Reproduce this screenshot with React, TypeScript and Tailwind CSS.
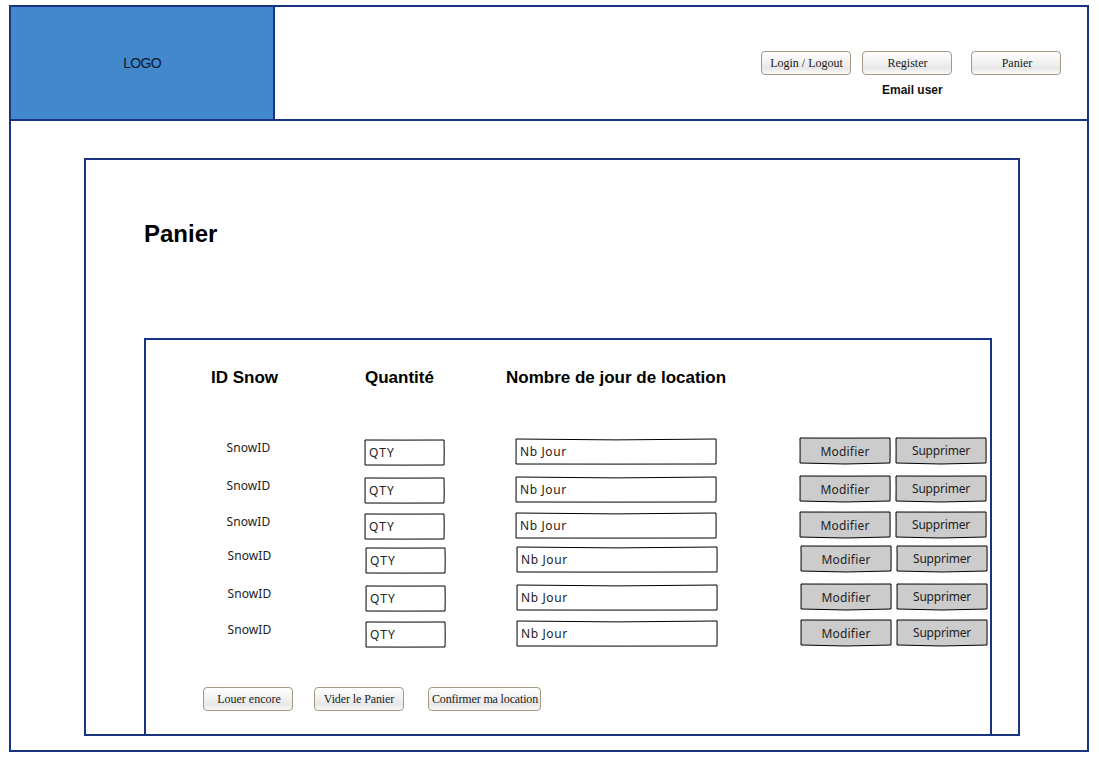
import type { ReactNode } from "react";

type Wobble = { width: number; path: string; fill: string };

const QTY_BOX: Wobble = { width: 82, path: "M1 1 L40 1.1 L80 1 L80.2 14 L80 26 L40 26.1 L1 26 L1.1 14 Z", fill: "#ffffff" };
const DAYS_BOX: Wobble = { width: 203, path: "M1 1 Q101 2.8 201 1 L201.1 13 L201 26 L101 26.1 L1 26 L1.1 13 Z", fill: "#ffffff" };
const ACTION_BOX: Wobble = { width: 92, path: "M1 1 L46 1.1 L91 1 L91.1 13 L91 26 Q46 28 1 26 L1.1 13 Z", fill: "#cccccc" };

const rows = [
  { id: 1, className: "h-[38px]" },
  { id: 2, className: "h-[36px]" },
  { id: 3, className: "h-[34px]" },
  { id: 4, className: "h-[38px] ml-px" },
  { id: 5, className: "h-[36px] ml-px" },
  { id: 6, className: "h-[65px] ml-px" },
];

function SketchBox({ box, className, children }: { box: Wobble; className: string; children: ReactNode }) {
  return (
    <div className={`grid h-[28px] ${className}`} style={{ width: box.width }}>
      <svg className="col-start-1 row-start-1 block" width={box.width} height="28" viewBox={`0 0 ${box.width} 28`}>
        <path d={box.path} fill={box.fill} stroke="#000000" strokeWidth="1" strokeLinejoin="round" />
      </svg>
      {children}
    </div>
  );
}

function Button({ className, children }: { className: string; children: ReactNode }) {
  return (
    <button
      className={`h-6 shrink-0 whitespace-nowrap rounded-[4px] border border-[#a69985] bg-linear-to-b from-white via-[#e8e8e8] via-75% to-[#fafafa] font-['Liberation_Serif',serif] text-[12px] leading-[22px] text-[#1a1a1a] ${className}`}
    >
      {children}
    </button>
  );
}

function CartRow({ className }: { className: string }) {
  return (
    <div
      className={`grid shrink-0 grid-cols-[138px_151px_284px_96px_92px] items-start pl-[80px] font-['Comic_Sans_MS','Noto_Sans',sans-serif] text-[12px] leading-[16px] text-[#222] ${className}`}
    >
      <span className="mt-[3px] ml-[0.5px] tracking-[0.1px]">SnowID</span>
      <SketchBox box={QTY_BOX} className="mt-[2px]">
        <span className="col-start-1 row-start-1 mt-[6px] ml-[5px] tracking-[1.2px]">QTY</span>
      </SketchBox>
      <SketchBox box={DAYS_BOX} className="mt-px">
        <span className="col-start-1 row-start-1 mt-[6px] ml-[5px] tracking-[0.6px]">Nb Jour</span>
      </SketchBox>
      <SketchBox box={ACTION_BOX} className="">
        <span className="col-start-1 row-start-1 mt-[7px] text-center tracking-[0.2px]">Modifier</span>
      </SketchBox>
      <SketchBox box={ACTION_BOX} className="">
        <span className="col-start-1 row-start-1 mt-[6px] text-center tracking-[-0.2px]">Supprimer</span>
      </SketchBox>
    </div>
  );
}

export default function App() {
  return (
    <div className="h-[766px] w-[1099px] bg-white pt-[5px] pl-[9px] font-['Liberation_Sans',sans-serif] text-black">
      <div className="flex h-[747px] w-[1080px] flex-col border-2 border-[#1a3380]">
        <header className="flex h-[114px] shrink-0 border-b-2 border-[#1a3380]">
          <div className="flex w-[264px] items-center justify-center border-r-2 border-[#1a3380] bg-[#4387cd] text-[14px] tracking-[-0.7px] text-[#0d1a26]">
            LOGO
          </div>
          <div className="flex flex-1 flex-col pt-[44px] pl-[486px]">
            <div className="flex">
              <Button className="w-[90px] pl-px">Login / Logout</Button>
              <Button className="ml-[11px] w-[90px] pl-px">Register</Button>
              <Button className="ml-[19px] w-[90px] pl-[2px]">Panier</Button>
            </div>
            <p className="mt-[8px] pl-[121px] text-[12px] leading-[14px] font-bold text-[#111]">Email user</p>
          </div>
        </header>

        <main className="mt-[37px] ml-[73px] flex h-[578px] w-[936px] flex-col border-2 border-[#1a3380]">
          <h1 className="mt-[60px] ml-[58px] text-[24px] leading-[28px] font-bold">Panier</h1>
          <section className="mt-[90px] ml-[58px] flex h-[396px] w-[848px] flex-col border-2 border-b-0 border-[#1a3380]">
            <div className="mt-[28px] grid h-[69px] shrink-0 grid-cols-[154px_141px_auto] pl-[65px] text-[17px] leading-[20px] font-bold">
              <h2>ID Snow</h2>
              <h2>Quantité</h2>
              <h2>Nombre de jour de location</h2>
            </div>
            {rows.map((row) => (
              <CartRow key={row.id} className={row.className} />
            ))}
            <div className="mt-[3px] flex pl-[57px]">
              <Button className="w-[90px] pl-[2px]">Louer encore</Button>
              <Button className="ml-[21px] w-[90px] tracking-[-0.1px]">Vider le Panier</Button>
              <Button className="ml-[24px] w-[113px] pl-px tracking-[-0.15px]">Confirmer ma location</Button>
            </div>
          </section>
        </main>
      </div>
    </div>
  );
}
